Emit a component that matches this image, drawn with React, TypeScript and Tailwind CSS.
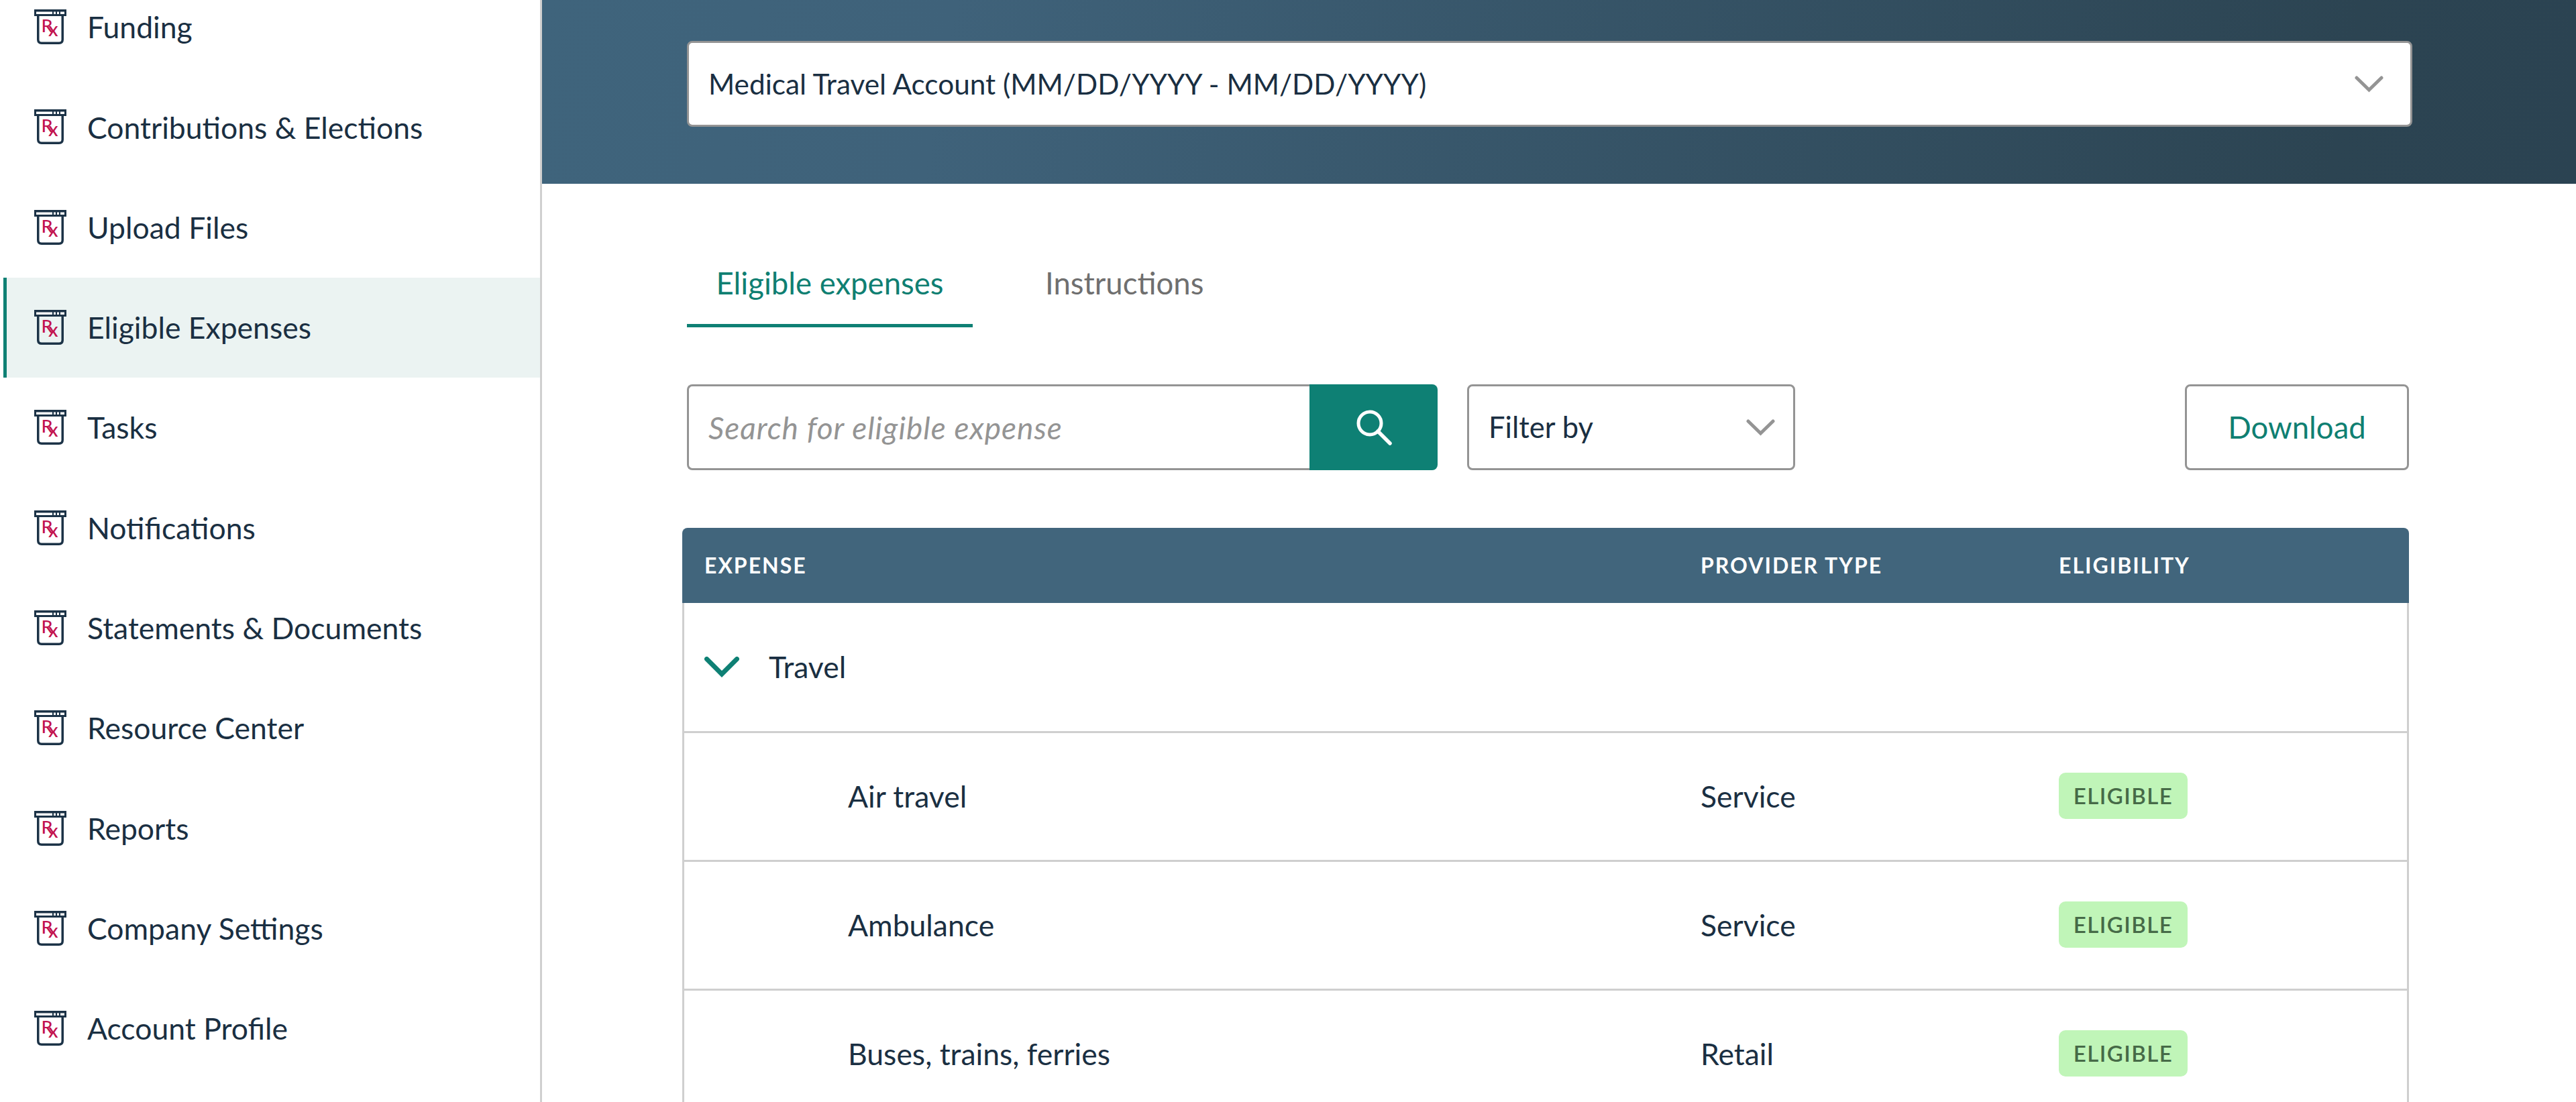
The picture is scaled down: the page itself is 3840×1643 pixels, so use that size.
const navItems = [
  "Funding",
  "Contributions & Elections",
  "Upload Files",
  "Eligible Expenses",
  "Tasks",
  "Notifications",
  "Statements & Documents",
  "Resource Center",
  "Reports",
  "Company Settings",
  "Account Profile",
];

const expenses = [
  { name: "Air travel", type: "Service" },
  { name: "Ambulance", type: "Service" },
  { name: "Buses, trains, ferries", type: "Retail" },
];

function RxIcon() {
  return (
    <svg width="48" height="53" viewBox="0 0 48 53" className="shrink-0">
      <rect x="0" y="0" width="48" height="10" fill="#1c3347" />
      <rect x="3" y="3.5" width="24" height="3.5" fill="#fff" />
      <rect x="29" y="3.5" width="3" height="3.5" fill="#fff" />
      <rect x="34" y="3.5" width="3" height="3.5" fill="#fff" />
      <rect x="39" y="3.5" width="6" height="3.5" fill="#fff" />
      <path
        d="M5.75 10 V45 Q5.75 50.25 11 50.25 H37 Q42.25 50.25 42.25 45 V10"
        fill="none"
        stroke="#1c3347"
        strokeWidth="3.5"
      />
      <text
        x="10.5"
        y="34"
        fill="#c2124f"
        fontFamily="Lato, sans-serif"
        fontSize="27"
        fontWeight="500"
      >
        R
      </text>
      <text
        x="21"
        y="40"
        fill="#c2124f"
        fontFamily="Lato, sans-serif"
        fontSize="29"
        fontWeight="500"
      >
        x
      </text>
    </svg>
  );
}

function SearchIcon() {
  return (
    <svg width="54" height="54" viewBox="0 0 54 54" fill="none">
      <circle cx="21" cy="21" r="17" stroke="#fff" strokeWidth="5" />
      <path d="M33 33 L51 51" stroke="#fff" strokeWidth="5.5" strokeLinecap="round" />
    </svg>
  );
}

function GreyChevron() {
  return (
    <svg width="43" height="25" viewBox="0 0 43 25" fill="none" className="shrink-0">
      <path d="M3 3 L21.5 21 L40 3" stroke="#949494" strokeWidth="5" strokeLinecap="round" />
    </svg>
  );
}

function TealChevron() {
  return (
    <svg width="52" height="31" viewBox="0 0 52 31" fill="none" className="shrink-0">
      <path d="M3.5 3.5 L26 26 L48.5 3.5" stroke="#0e8074" strokeWidth="7" strokeLinecap="round" />
    </svg>
  );
}

export default function App() {
  return (
    <div className="flex h-[1643px] overflow-hidden bg-white font-['Lato',sans-serif] text-[44.5px] text-[#1a2f42]">
      <aside className="w-[808px] shrink-0 border-r-[3px] border-[#cfcfcf]">
        <nav className="-mt-[34px] flex flex-col">
          {navItems.map((item) => (
            <div
              key={item}
              className={
                item === "Eligible Expenses"
                  ? "ml-[5px] flex h-[149.3px] items-center gap-[31px] border-l-[5px] border-[#0e8074] bg-[#ebf3f2] pl-[41px]"
                  : "ml-[5px] flex h-[149.3px] items-center gap-[31px] pl-[46px]"
              }
            >
              <RxIcon />
              <span>{item}</span>
            </div>
          ))}
        </nav>
      </aside>

      <main className="min-w-0 flex-1">
        <div className="h-[274px] bg-[linear-gradient(100deg,#3f647c_0%,#3f627a_20%,#2c4452_88%,#2b4352_100%)] pl-[216px] pt-[61px]">
          <div className="flex h-[128px] w-[2572px] items-center justify-between rounded-[8px] border-[3px] border-[#949494] bg-white pl-[29px] pr-[40px] text-[42.3px]">
            <span>Medical Travel Account (MM/DD/YYYY - MM/DD/YYYY)</span>
            <GreyChevron />
          </div>
        </div>

        <div className="pl-[216px]">
          <div className="mt-[92px] flex h-[122px] items-start text-[45.5px]">
            <div className="flex h-[122px] w-[426px] justify-center border-b-[5px] border-[#0e8074] pt-[22px] text-[#0f7f72]">
              Eligible expenses
            </div>
            <div className="ml-[108px] pt-[22px] text-[#6f6f6f]">Instructions</div>
          </div>

          <div className="mt-[85px] flex h-[128px] w-[2567px] items-stretch">
            <div className="flex w-[928px] items-center rounded-l-[8px] border-[3px] border-r-0 border-[#949494] pl-[29px] text-[46px] italic tracking-[1px] text-[#949494]">
              Search for eligible expense
            </div>
            <div className="flex w-[191px] items-center justify-center rounded-r-[8px] bg-[#0e8074]">
              <SearchIcon />
            </div>
            <div className="ml-[44px] flex w-[489px] items-center justify-between rounded-[8px] border-[3px] border-[#949494] pl-[29px] pr-[27px] text-[43.5px]">
              <span>Filter by</span>
              <GreyChevron />
            </div>
            <div className="ml-auto flex w-[334px] items-center justify-center rounded-[8px] border-[3px] border-[#949494] text-[45.5px] text-[#0f7f72]">
              Download
            </div>
          </div>

          <div className="-ml-[7px] mt-[86px] w-[2574px]">
            <div className="grid h-[112px] grid-cols-[1518px_534px_1fr] items-center rounded-t-[8px] bg-[#41657c] text-[32px] font-bold tracking-[2px] text-white">
              <div className="pl-[33px]">EXPENSE</div>
              <div>PROVIDER TYPE</div>
              <div>ELIGIBILITY</div>
            </div>
            <div className="border-x-[3px] border-[#cfcfcf]">
              <div className="flex h-[194px] items-center border-b-[3px] border-[#cfcfcf] pl-[30px]">
                <TealChevron />
                <span className="ml-[44px]">Travel</span>
              </div>
              {expenses.map((row) => (
                <div
                  key={row.name}
                  className="grid h-[192px] grid-cols-[1515px_534px_1fr] items-center border-b-[3px] border-[#cfcfcf]"
                >
                  <div className="pl-[244px]">{row.name}</div>
                  <div>{row.type}</div>
                  <div className="flex">
                    <span className="mb-[2px] flex h-[69px] w-[192px] items-center justify-center rounded-[10px] bg-[#c0f5b8] text-[33px] font-semibold tracking-[1.5px] text-[#466a47]">
                      ELIGIBLE
                    </span>
                  </div>
                </div>
              ))}
            </div>
          </div>
        </div>
      </main>
    </div>
  );
}
